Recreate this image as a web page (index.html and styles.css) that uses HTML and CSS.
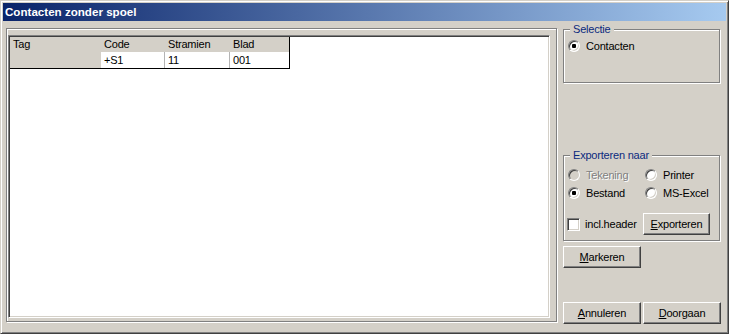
FILE: index.html
```html
<!DOCTYPE html>
<html lang="nl">
<head>
    <meta charset="UTF-8">
    <title>Contacten zonder spoel</title>
    <link rel="stylesheet" href="styles.css">
</head>
<body>
    <div class="window">
        <div class="titlebar">Contacten zonder spoel</div>

        <div class="client">
            <div class="panel">
                <div class="list">
                    <div class="grid">
                        <div class="cell fixed">Tag</div>
                        <div class="cell fixed">Code</div>
                        <div class="cell fixed">Stramien</div>
                        <div class="cell fixed last">Blad</div>

                        <div class="cell fixed data"></div>
                        <div class="cell data">+S1</div>
                        <div class="cell data">11</div>
                        <div class="cell data last">001</div>
                    </div>
                </div>
            </div>

            <div class="side">
                <fieldset class="group group-select">
                    <legend>Selectie</legend>
                    <label class="option"><span class="radio checked"></span>Contacten</label>
                </fieldset>

                <fieldset class="group group-export">
                    <legend>Exporteren naar</legend>
                    <div class="option-row">
                        <label class="option disabled"><span class="radio"></span>Tekening</label>
                        <label class="option"><span class="radio"></span>Printer</label>
                    </div>
                    <div class="option-row">
                        <label class="option"><span class="radio checked"></span>Bestand</label>
                        <label class="option"><span class="radio"></span>MS-Excel</label>
                    </div>
                    <div class="export-row">
                        <label class="option check"><span class="checkbox"></span>incl.header</label>
                        <button class="btn btn-export"><u>E</u>xporteren</button>
                    </div>
                </fieldset>

                <button class="btn btn-mark"><u>M</u>arkeren</button>

                <div class="actions">
                    <button class="btn"><u>A</u>nnuleren</button>
                    <button class="btn"><u>D</u>oorgaan</button>
                </div>
            </div>
        </div>
    </div>
</body>
</html>
```

FILE: styles.css
```css
body {
    margin: 0;
    background-color: #d4d0c8;
    font-family: "Liberation Sans", Arial, sans-serif;
    font-size: 11px;
    letter-spacing: -0.2px;
    color: #000;
}

.window {
    width: 729px;
    height: 334px;
    box-sizing: border-box;
    padding: 2px;
    background-color: #d4d0c8;
    border: 1px solid;
    border-color: #d4d0c8 #404040 #404040 #d4d0c8;
    box-shadow: inset 1px 1px #fff, inset -1px -1px #808080;
}

.titlebar {
    height: 18px;
    line-height: 18px;
    padding-left: 2px;
    background: linear-gradient(to right, #0a246a, #a6caf0);
    color: white;
    font-weight: bold;
    font-size: 11.6px;
    letter-spacing: 0;
}

.client {
    display: flex;
}

/* etched frame round the list */
.panel {
    width: 551px;
    height: 294px;
    box-sizing: border-box;
    margin: 7px 0 0 3px;
    padding: 6px 6px 3px 1px;
    border: 1px solid #808080;
    box-shadow: inset 1px 1px #fff, 1px 1px #fff;
}

.list {
    width: 542px;
    height: 283px;
    box-sizing: border-box;
    padding: 1px;
    background: white;
    border: 1px solid;
    border-color: #808080 #fff #fff #808080;
    box-shadow: inset 1px 1px #404040, inset -1px -1px #d4d0c8;
}

.grid {
    display: grid;
    grid-template-columns: 91px 64px 65px 59px;
    width: fit-content;
    border-right: 1px solid #000;
    border-bottom: 1px solid #000;
}

.cell {
    height: 15px;
    line-height: 15px;
    padding-left: 3px;
    box-sizing: border-box;
    background: white;
    border-right: 1px solid #b4b4b4;
    white-space: nowrap;
}

.cell.data {
    height: 16px;
    padding-top: 1px;
}

.cell.fixed {
    background: #d4d0c8;
    border-right-color: #d4d0c8;
}

.cell.last {
    border-right: none;
}

.side {
    width: 158px;
    margin-left: 6px;
    display: flex;
    flex-direction: column;
}

.group {
    margin: 0;
    min-width: 0;
    width: 157px;
    box-sizing: border-box;
    border: 1px solid #808080;
    box-shadow: inset 1px 1px #fff, 1px 1px #fff;
}

.group legend {
    margin-left: 2px;
    padding: 0 3px;
    line-height: 13px;
    color: #0b2a7e;
    background: #d4d0c8;
}

.group-select {
    margin-top: 2px;
    padding: 1px 4px 27px 4px;
}

.group-export {
    margin-top: 66px;
    padding: 4px 4px 5px 4px;
}

.option {
    display: flex;
    align-items: center;
    gap: 6px;
    height: 18px;
}

.option.disabled {
    color: #808080;
    text-shadow: 1px 1px #fff;
}

.option-row {
    display: flex;
}

.option-row .option:first-child {
    width: 77px;
}

.radio {
    width: 12px;
    height: 12px;
    box-sizing: border-box;
    border-radius: 50%;
    background: white;
    border: 1px solid;
    border-color: #808080 #fff #fff #808080;
    box-shadow: inset 1px 1px #404040, inset -1px -1px #d4d0c8;
    display: inline-flex;
    align-items: center;
    justify-content: center;
}

.disabled .radio {
    background: #d4d0c8;
}

.radio.checked::after {
    content: "";
    width: 4px;
    height: 4px;
    border-radius: 1px;
    background: #000;
}

.export-row {
    display: flex;
    align-items: center;
    margin-top: 11px;
    height: 22px;
}

.option.check {
    width: 76px;
    margin-left: -1px;
    gap: 5px;
}

.checkbox {
    width: 13px;
    height: 13px;
    box-sizing: border-box;
    background: white;
    border: 1px solid;
    border-color: #808080 #fff #fff #808080;
    box-shadow: inset 1px 1px #404040, inset -1px -1px #d4d0c8;
}

.btn {
    width: 78px;
    height: 22px;
    padding: 0;
    box-sizing: border-box;
    font-family: inherit;
    font-size: 11px;
    letter-spacing: -0.2px;
    color: #000;
    background: #d4d0c8;
    border: 1px solid;
    border-color: #fff #404040 #404040 #fff;
    box-shadow: inset -1px -1px #808080, inset 1px 1px #d4d0c8;
    border-radius: 0;
}

.btn-export {
    width: 67px;
}

.btn-mark {
    margin-top: 5px;
}

.actions {
    display: flex;
    gap: 2px;
    margin-top: 34px;
}
```
